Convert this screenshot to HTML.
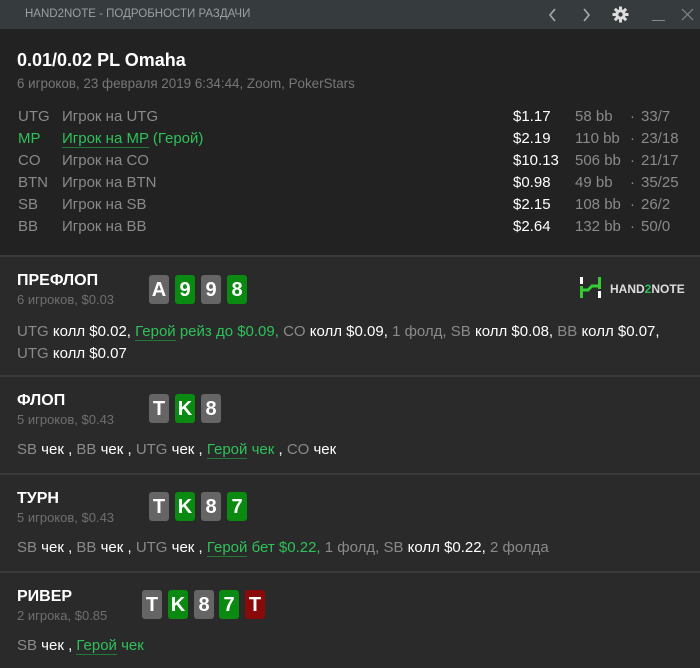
<!DOCTYPE html>
<html><head><meta charset="utf-8"><style>
*{margin:0;padding:0;box-sizing:border-box}
body{width:700px;height:668px;background:#2a2a2a;font-family:"Liberation Sans",sans-serif;color:#fff;position:relative;overflow:hidden;font-size:15px}
.a{position:absolute;white-space:nowrap}
.bar{left:0;top:0;width:700px;height:29px;background:#363b3d}
.hdr{left:0;top:29px;width:700px;height:226px;background:#222}
.sep{left:0;width:700px;height:2px;background:#3a3a3a}
.g{color:#8a8a8a}
.gr{color:#2ec15a}
.w{color:#fff}
.t{font-weight:bold;font-size:16px}
.s{font-size:13px;color:#6f6f6f}
.c{position:absolute;width:20px;height:29px;border-radius:3px;font-weight:bold;font-size:20px;text-align:center;line-height:30px;color:#fff}
.cg{background:#656565}.cgr{background:#0a8a10}.cr{background:#8a0a0a}
u{text-decoration:none;border-bottom:1px solid #1f7a3a}
</style></head><body>
<div class="a bar"></div>
<div class="a" style="left:25px;top:8px;font-size:11.5px;color:#9aa0a2">HAND2NOTE - ПОДРОБНОСТИ РАЗДАЧИ</div>
<svg class="a" style="left:548px;top:8px" width="10" height="14"><path d="M7 1 L2 7 L7 13" stroke="#aaa" stroke-width="1.6" fill="none"/></svg>
<svg class="a" style="left:581px;top:8px" width="10" height="14"><path d="M3 1 L8 7 L3 13" stroke="#aaa" stroke-width="1.6" fill="none"/></svg>
<svg class="a" style="left:612px;top:6px" width="17" height="17" viewBox="0 0 17 17"><g fill="#ddd"><circle cx="8.5" cy="8.5" r="5.2"/><rect x="7" y="0.5" width="3" height="16"/><rect x="0.5" y="7" width="16" height="3"/><rect x="7" y="0.5" width="3" height="16" transform="rotate(45 8.5 8.5)"/><rect x="7" y="0.5" width="3" height="16" transform="rotate(-45 8.5 8.5)"/></g><circle cx="8.5" cy="8.5" r="2.2" fill="#363b3d"/></svg>
<div class="a" style="left:652px;top:20px;width:13px;height:1px;background:#888"></div>
<svg class="a" style="left:681px;top:8px" width="13" height="13"><path d="M1 1 L12 12 M12 1 L1 12" stroke="#888" stroke-width="1.2"/></svg>
<div class="a hdr"></div>
<div class="a t" style="left:17px;top:50px;font-size:18px">0.01/0.02 PL Omaha</div>
<div class="a" style="left:17px;top:76px;font-size:13.4px;color:#777">6 игроков, 23 февраля 2019 6:34:44, Zoom, PokerStars</div>
<div class="a g" style="left:18px;top:106px;line-height:22px">UTG<br><span class="gr">MP</span><br>CO<br>BTN<br>SB<br>BB</div>
<div class="a g" style="left:62px;top:106px;line-height:22px">Игрок на UTG<br><span class="gr"><u>Игрок на MP</u> (Герой)</span><br>Игрок на CO<br>Игрок на BTN<br>Игрок на SB<br>Игрок на BB</div>
<div class="a w" style="left:513px;top:106px;line-height:22px">$1.17<br>$2.19<br>$10.13<br>$0.98<br>$2.15<br>$2.64</div>
<div class="a g" style="left:575px;top:106px;line-height:22px">58 bb<br>110 bb<br>506 bb<br>49 bb<br>108 bb<br>132 bb</div>
<div class="a g" style="left:630px;top:106px;line-height:22px">·<br>·<br>·<br>·<br>·<br>·</div>
<div class="a g" style="left:641px;top:106px;line-height:22px">33/7<br>23/18<br>21/17<br>35/25<br>26/2<br>50/0</div>

<div class="a sep" style="top:255px"></div>
<div class="a t" style="left:17px;top:272px">ПРЕФЛОП</div>
<div class="a s" style="left:17px;top:292px">6 игроков, $0.03</div>
<div class="c cg" style="left:149px;top:275px">A</div><div class="c cgr" style="left:175px;top:275px">9</div><div class="c cg" style="left:201px;top:275px">9</div><div class="c cgr" style="left:227px;top:275px">8</div>
<svg class="a" style="left:580px;top:277px" width="22" height="22"><rect x="0" y="0" width="3" height="7" fill="#fff"/><rect x="0" y="9" width="3" height="12" fill="#3c3"/><rect x="18" y="0" width="3" height="12" fill="#3c3"/><rect x="18" y="14" width="3" height="7" fill="#fff"/><path d="M1 13 L8 13 L12 9 L19 9" stroke="#3c3" stroke-width="3" fill="none"/></svg>
<div class="a" style="left:610px;top:282px;font-size:12px;font-weight:bold;color:#ddd">HAND<span class="gr">2</span>NOTE</div>
<div class="a" style="left:17px;top:321px;line-height:22px"><span class="g">UTG</span> колл $0.02, <span class="gr"><u>Герой</u> рейз до $0.09,</span> <span class="g">CO</span> колл $0.09, <span class="g">1 фолд,</span> <span class="g">SB</span> колл $0.08, <span class="g">BB</span> колл $0.07,<br><span class="g">UTG</span> колл $0.07</div>

<div class="a sep" style="top:375px"></div>
<div class="a t" style="left:17px;top:392px">ФЛОП</div>
<div class="a s" style="left:17px;top:412px">5 игроков, $0.43</div>
<div class="c cg" style="left:149px;top:394px">T</div><div class="c cgr" style="left:175px;top:394px">K</div><div class="c cg" style="left:201px;top:394px">8</div>
<div class="a" style="left:17px;top:441px"><span class="g">SB</span> чек , <span class="g">BB</span> чек , <span class="g">UTG</span> чек , <span class="gr"><u>Герой</u> чек</span> , <span class="g">CO</span> чек</div>

<div class="a sep" style="top:473px"></div>
<div class="a t" style="left:17px;top:490px">ТУРН</div>
<div class="a s" style="left:17px;top:510px">5 игроков, $0.43</div>
<div class="c cg" style="left:149px;top:492px">T</div><div class="c cgr" style="left:175px;top:492px">K</div><div class="c cg" style="left:201px;top:492px">8</div><div class="c cgr" style="left:227px;top:492px">7</div>
<div class="a" style="left:17px;top:539px"><span class="g">SB</span> чек , <span class="g">BB</span> чек , <span class="g">UTG</span> чек , <span class="gr"><u>Герой</u> бет $0.22,</span> <span class="g">1 фолд,</span> <span class="g">SB</span> колл $0.22, <span class="g">2 фолда</span></div>

<div class="a sep" style="top:571px"></div>
<div class="a t" style="left:17px;top:588px">РИВЕР</div>
<div class="a s" style="left:17px;top:608px">2 игрока, $0.85</div>
<div class="c cg" style="left:142px;top:590px">T</div><div class="c cgr" style="left:168px;top:590px">K</div><div class="c cg" style="left:194px;top:590px">8</div><div class="c cgr" style="left:219px;top:590px">7</div><div class="c cr" style="left:245px;top:590px">T</div>
<div class="a" style="left:17px;top:637px"><span class="g">SB</span> чек , <span class="gr"><u>Герой</u> чек</span></div>
</body></html>
